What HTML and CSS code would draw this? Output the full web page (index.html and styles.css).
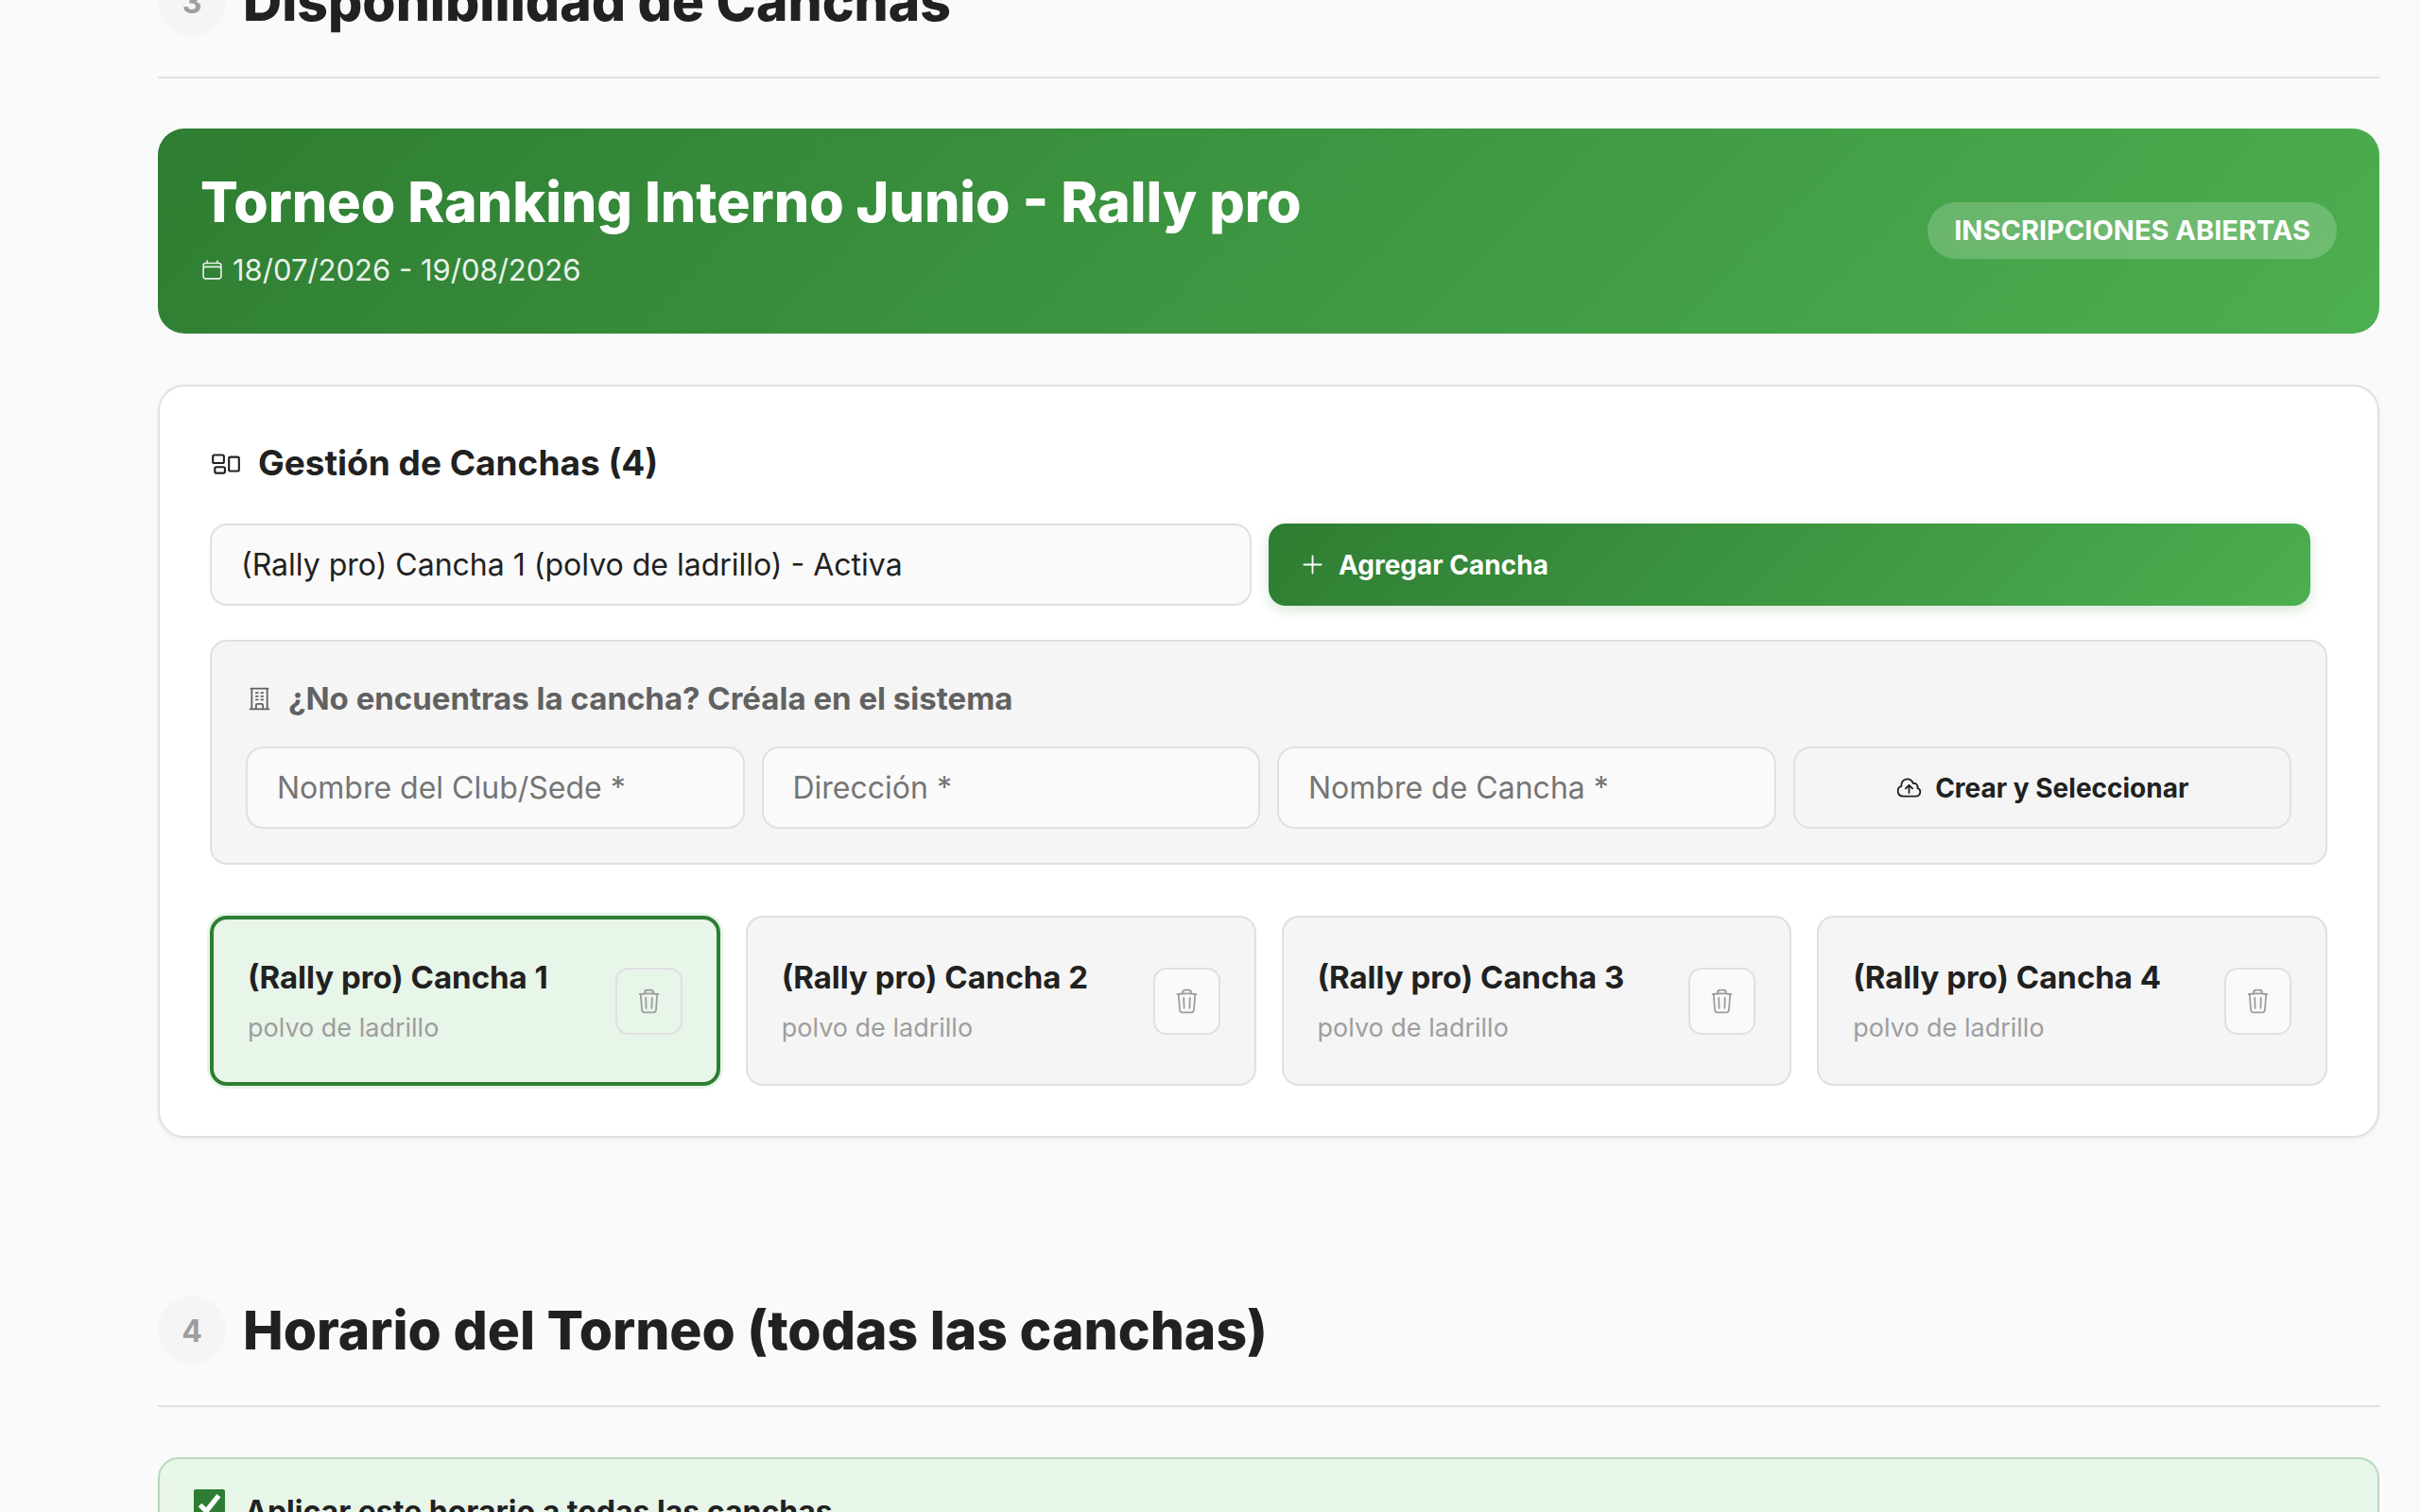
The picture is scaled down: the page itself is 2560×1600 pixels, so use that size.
FILE: index.html
```html
<!DOCTYPE html>
<html lang="es">
<head>
    <meta charset="UTF-8">
    <meta name="viewport" content="width=device-width, initial-scale=1.0">
    <title>Torneo Ranking Interno Junio - Rally pro</title>
    <link rel="stylesheet" href="styles.css">
</head>
<body>
    <!-- Icon sprites -->
    <svg class="sprites" aria-hidden="true">
        <symbol id="icon-calendar" viewBox="0 0 24 24">
            <path d="M6.75 3v2.25M17.25 3v2.25M3 18.75V7.5a2.25 2.25 0 0 1 2.25-2.25h13.5A2.25 2.25 0 0 1 21 7.5v11.25m-18 0A2.25 2.25 0 0 0 5.25 21h13.5A2.25 2.25 0 0 0 21 18.75m-18 0v-7.5A2.25 2.25 0 0 1 5.25 9h13.5A2.25 2.25 0 0 1 21 11.25v7.5"/>
        </symbol>
        <symbol id="icon-group" viewBox="0 0 24 24">
            <path d="M2.25 7.125C2.25 6.504 2.754 6 3.375 6h6c.621 0 1.125.504 1.125 1.125v3.75c0 .621-.504 1.125-1.125 1.125h-6a1.125 1.125 0 0 1-1.125-1.125v-3.75ZM14.25 8.625c0-.621.504-1.125 1.125-1.125h5.25c.621 0 1.125.504 1.125 1.125v8.25c0 .621-.504 1.125-1.125 1.125h-5.25a1.125 1.125 0 0 1-1.125-1.125v-8.25ZM3.75 16.125c0-.621.504-1.125 1.125-1.125h5.25c.621 0 1.125.504 1.125 1.125v2.25c0 .621-.504 1.125-1.125 1.125h-5.25a1.125 1.125 0 0 1-1.125-1.125v-2.25Z"/>
        </symbol>
        <symbol id="icon-plus" viewBox="0 0 24 24">
            <path d="M12 4.5v15m7.5-7.5h-15"/>
        </symbol>
        <symbol id="icon-building" viewBox="0 0 24 24">
            <path d="M3.75 21h16.5M4.5 3h15M5.25 3v18m13.5-18v18M9 6.75h1.5m-1.5 3h1.5m-1.5 3h1.5m3-6H15m-1.5 3H15m-1.5 3H15M9 21v-3.375c0-.621.504-1.125 1.125-1.125h3.75c.621 0 1.125.504 1.125 1.125V21"/>
        </symbol>
        <symbol id="icon-cloud" viewBox="0 0 24 24">
            <path d="M12 16.5V9.75m0 0 3 3m-3-3-3 3M6.75 19.5a4.5 4.5 0 0 1-1.41-8.775 5.25 5.25 0 0 1 10.233-2.33 3 3 0 0 1 3.758 3.848A3.752 3.752 0 0 1 18 19.5H6.75Z"/>
        </symbol>
        <symbol id="icon-trash" viewBox="0 0 24 24">
            <path d="m14.74 9-.346 9m-4.788 0L9.26 9m9.968-3.21c.342.052.682.107 1.022.166m-1.022-.165L18.16 19.673a2.25 2.25 0 0 1-2.244 2.077H8.084a2.25 2.25 0 0 1-2.244-2.077L4.772 5.79m14.456 0a48.108 48.108 0 0 0-3.478-.397m-12 .562c.34-.059.68-.114 1.022-.165m0 0a48.11 48.11 0 0 1 3.478-.397m7.5 0v-.916c0-1.18-.91-2.164-2.09-2.201a51.964 51.964 0 0 0-3.32 0c-1.18.037-2.09 1.022-2.09 2.201v.916m7.5 0a48.667 48.667 0 0 0-7.5 0"/>
        </symbol>
    </svg>

    <main class="wizard">
        <section class="step step-courts">
            <header class="step-header">
                <span class="step-number">3</span>
                <h2>Disponibilidad de Canchas</h2>
            </header>

            <div class="banner">
                <div class="banner-info">
                    <h3>Torneo Ranking Interno Junio - Rally pro</h3>
                    <p><svg class="icon"><use href="#icon-calendar"/></svg>18/07/2026 - 19/08/2026</p>
                </div>
                <span class="badge">INSCRIPCIONES ABIERTAS</span>
            </div>

            <div class="card">
                <h3 class="card-title"><svg class="icon"><use href="#icon-group"/></svg>Gestión de Canchas (4)</h3>

                <form class="add-row">
                    <select class="field" aria-label="Cancha">
                        <option>(Rally pro) Cancha 1 (polvo de ladrillo) - Activa</option>
                    </select>
                    <button type="button" class="btn btn-primary"><svg class="icon"><use href="#icon-plus"/></svg>Agregar Cancha</button>
                </form>

                <form class="create-box">
                    <h4><svg class="icon"><use href="#icon-building"/></svg>¿No encuentras la cancha? Créala en el sistema</h4>
                    <div class="create-grid">
                        <input class="field" type="text" placeholder="Nombre del Club/Sede *" aria-label="Nombre del Club/Sede">
                        <input class="field" type="text" placeholder="Dirección *" aria-label="Dirección">
                        <input class="field" type="text" placeholder="Nombre de Cancha *" aria-label="Nombre de Cancha">
                        <button type="button" class="btn btn-secondary"><svg class="icon"><use href="#icon-cloud"/></svg>Crear y Seleccionar</button>
                    </div>
                </form>

                <div class="courts">
                    <div class="court active">
                        <div class="court-info">
                            <strong>(Rally pro) Cancha 1</strong>
                            <span>polvo de ladrillo</span>
                        </div>
                        <button type="button" class="btn-trash" aria-label="Eliminar cancha 1"><svg class="icon"><use href="#icon-trash"/></svg></button>
                    </div>
                    <div class="court">
                        <div class="court-info">
                            <strong>(Rally pro) Cancha 2</strong>
                            <span>polvo de ladrillo</span>
                        </div>
                        <button type="button" class="btn-trash" aria-label="Eliminar cancha 2"><svg class="icon"><use href="#icon-trash"/></svg></button>
                    </div>
                    <div class="court">
                        <div class="court-info">
                            <strong>(Rally pro) Cancha 3</strong>
                            <span>polvo de ladrillo</span>
                        </div>
                        <button type="button" class="btn-trash" aria-label="Eliminar cancha 3"><svg class="icon"><use href="#icon-trash"/></svg></button>
                    </div>
                    <div class="court">
                        <div class="court-info">
                            <strong>(Rally pro) Cancha 4</strong>
                            <span>polvo de ladrillo</span>
                        </div>
                        <button type="button" class="btn-trash" aria-label="Eliminar cancha 4"><svg class="icon"><use href="#icon-trash"/></svg></button>
                    </div>
                </div>
            </div>
        </section>

        <section class="step">
            <header class="step-header">
                <span class="step-number">4</span>
                <h2>Horario del Torneo (todas las canchas)</h2>
            </header>

            <label class="apply-all">
                <input type="checkbox" checked>
                Aplicar este horario a todas las canchas
            </label>
        </section>
    </main>
</body>
</html>
```
FILE: styles.css
```css
:root {
    --green: #2e7d32;
    --green-light: #4caf50;
    --green-pale: #e8f5e9;
    --text: #212121;
    --text-mid: #616161;
    --text-soft: #9e9e9e;
    --bg: #fafafa;
    --panel: #f5f5f5;
    --border: #e0e0e0;
    --gradient: linear-gradient(135deg, var(--green) 0%, var(--green-light) 100%);
}

* {
    box-sizing: border-box;
}

body {
    margin: 0;
    height: 100vh;
    overflow: hidden;
    background: var(--bg);
    color: var(--text);
    font-family: "Inter", sans-serif;
    font-size: 32px;
}

h2, h3, h4, p {
    margin: 0;
}

input, select, button {
    font-family: inherit;
}

.sprites {
    display: none;
}

.icon {
    width: 29px;
    height: 29px;
    flex: none;
    fill: none;
    stroke: currentColor;
    stroke-width: 1.5;
    stroke-linecap: round;
    stroke-linejoin: round;
}

.wizard {
    padding: 0 43px 0 167px;
}

.step {
    margin-bottom: 168px;
}

/* the page is scrolled, so step 3 starts above the window */
.step-courts {
    margin-top: -34px;
}

.step-header {
    display: flex;
    align-items: center;
    gap: 18px;
    padding-bottom: 43px;
    margin-bottom: 53px;
    border-bottom: 2px solid var(--border);
}

.step-header h2 {
    font-size: 57px;
    line-height: 72px;
    font-weight: 800;
}

.step-number {
    display: flex;
    align-items: center;
    justify-content: center;
    width: 72px;
    height: 72px;
    border-radius: 50%;
    background: var(--panel);
    color: var(--text-soft);
    font-size: 32px;
    font-weight: 700;
}

.banner {
    display: flex;
    align-items: center;
    justify-content: space-between;
    padding: 42px 45px 44px;
    margin-bottom: 54px;
    border-radius: 28px;
    background: var(--gradient);
    color: #fff;
}

.banner h3 {
    font-size: 59px;
    line-height: 72px;
    font-weight: 800;
    margin-bottom: 12px;
}

.banner p {
    display: flex;
    align-items: center;
    gap: 9px;
    font-size: 31px;
    line-height: 47px;
    opacity: 0.9;
}

.banner p .icon {
    width: 25px;
    height: 25px;
}

.badge {
    padding: 12px 28px;
    border-radius: 36px;
    background: rgba(255, 255, 255, 0.2);
    font-size: 29px;
    line-height: 36px;
    font-weight: 700;
}

.card {
    padding: 53px;
    border: 2px solid var(--border);
    border-radius: 28px;
    background: #fff;
    box-shadow: 0 2px 5px rgba(0, 0, 0, 0.05);
}

.card-title {
    display: flex;
    align-items: center;
    gap: 17px;
    margin-bottom: 36px;
    font-size: 37px;
    line-height: 56px;
    font-weight: 700;
}

.card-title .icon {
    width: 34px;
    height: 34px;
}

.add-row {
    display: grid;
    grid-template-columns: 1fr 1fr;
    gap: 18px;
    padding-right: 18px;
    margin-bottom: 36px;
}

.field {
    width: 100%;
    height: 87px;
    padding: 0 31px;
    border: 2px solid var(--border);
    border-radius: 18px;
    background: var(--bg);
    color: var(--text);
    font-size: 32px;
    appearance: none;
}

.field::placeholder {
    color: #757575;
}

.btn {
    display: flex;
    align-items: center;
    gap: 13px;
    height: 87px;
    padding: 0 32px;
    border-radius: 18px;
    font-size: 28px;
    font-weight: 700;
}

.btn-primary {
    border: none;
    background: var(--gradient);
    color: #fff;
    box-shadow: 0 4px 14px rgba(46, 125, 50, 0.2);
}

.btn-secondary {
    justify-content: center;
    border: 2px solid var(--border);
    background: var(--panel);
    color: var(--text);
}

.create-box {
    padding: 36px;
    margin-bottom: 54px;
    border: 2px solid var(--border);
    border-radius: 18px;
    background: var(--panel);
}

.create-box h4 {
    display: flex;
    align-items: center;
    gap: 16px;
    margin-bottom: 27px;
    color: var(--text-mid);
    font-size: 33px;
    line-height: 48px;
    font-weight: 700;
}

.create-grid {
    display: grid;
    grid-template-columns: repeat(4, 1fr);
    gap: 18px;
}

.courts {
    display: grid;
    grid-template-columns: repeat(4, 1fr);
    gap: 27px;
}

.court {
    display: flex;
    align-items: center;
    justify-content: space-between;
    height: 180px;
    padding: 0 36px;
    border: 2px solid var(--border);
    border-radius: 18px;
    background: var(--panel);
}

.court.active {
    border: 4px solid var(--green);
    background: var(--green-pale);
    box-shadow: 0 0 0 3px var(--green-pale);
}

.court-info {
    display: flex;
    flex-direction: column;
    gap: 7px;
}

.court-info strong {
    font-size: 33px;
    line-height: 50px;
    font-weight: 700;
}

.court-info span {
    color: var(--text-soft);
    font-size: 27px;
    line-height: 43px;
}

.btn-trash {
    display: flex;
    align-items: center;
    justify-content: center;
    width: 71px;
    height: 71px;
    padding: 0;
    border: 2px solid var(--border);
    border-radius: 14px;
    background: var(--bg);
    color: var(--text-soft);
}

.active .btn-trash {
    background: transparent;
}

.apply-all {
    display: flex;
    align-items: flex-start;
    gap: 21px;
    padding: 32px 36px;
    border: 2px solid #b9d8bb;
    border-radius: 22px;
    background: var(--green-pale);
    font-size: 32px;
    line-height: 48px;
    font-weight: 700;
}

.apply-all input {
    width: 33px;
    height: 33px;
    margin: 0;
    accent-color: var(--green);
}
```
